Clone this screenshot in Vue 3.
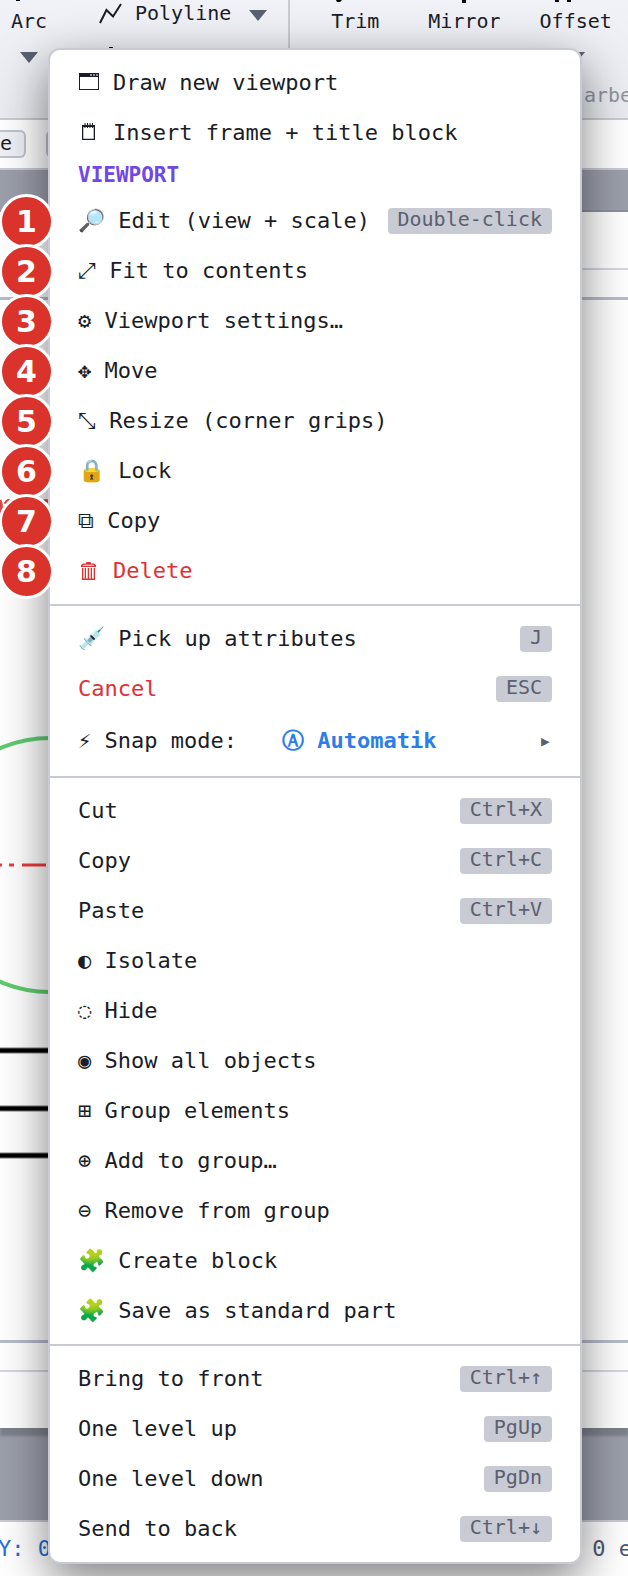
<template>
  <div class="app">
    <div class="workspace">
      <header class="toolbar">
        <div class="tool tool-arc">
          <svg class="stub" width="68" height="2"><path d="M16 0h4v1h-4z" /></svg>
          <span>Arc</span>
          <i class="caret"></i>
        </div>
        <div class="tool-line">
          <svg class="polyline" width="24" height="24" viewBox="0 0 24 24">
            <path d="M1 22 L7.500 9 L14 15.500 L22 3" />
          </svg>
          <span>Polyline</span>
          <i class="caret"></i>
          <svg class="peek" width="6" height="2"><path d="M1 1h4v1H1z" /></svg>
        </div>
        <div class="separator"></div>
        <div v-for="tool in tools" :key="tool.name" class="tool">
          <svg class="stub" width="68" height="3"><path :d="tool.stub" /></svg>
          <span>{{ tool.name }}</span>
          <i v-if="tool.more" class="caret"></i>
        </div>
        <span class="group-name">arbe</span>
      </header>

      <nav class="tabs">
        <button type="button" class="tab tab-first">e</button>
        <button type="button" class="tab tab-next" aria-label="Layout"></button>
      </nav>

      <main class="canvas">
        <div class="paper">
          <div class="frame-outer"></div>
          <div class="frame-inner"></div>
          <svg class="drawing" width="60" height="1216" viewBox="0 212 60 1216">
            <circle cx="50" cy="865" r="127" fill="none" stroke="#5ecb70" stroke-width="4" />
            <path d="M0 865H2M9 865H14M22 865H46" stroke="#ee3a3a" stroke-width="3" />
            <path d="M0 1050.500H60M0 1108.500H60M0 1155.500H60" stroke="#777" stroke-width="6" />
            <path d="M0 1050.500H60M0 1108.500H60M0 1155.500H60" stroke="#000" stroke-width="4" />
            <path d="M0 500Q3 508 0 516M5 504Q8 498 12 502M42 502Q46 499 49 502" fill="none" stroke="#e04545" stroke-width="3" />
            <path d="M0 577h2" stroke="#555" stroke-width="2" />
          </svg>
        </div>
      </main>

      <footer class="status">
        <span class="coords">Y: 0</span>
        <span class="selection">0 e</span>
      </footer>
    </div>

    <div class="menu" role="menu">
      <template v-for="(group, g) in groups" :key="g">
        <hr v-if="g > 0" class="divider">
        <template v-for="item in group" :key="item.label">
          <h2 v-if="item.heading" class="heading">{{ item.label }}</h2>
          <button
            v-else
            type="button"
            role="menuitem"
            class="item"
            :class="{ danger: item.danger, snap: item.value }"
          >
            <span v-if="item.step" class="step">{{ item.step }}</span>
            <svg v-if="item.shape" class="icon" width="22" height="26" viewBox="0 0 22 26">
              <path :d="item.shape" fill="currentColor" fill-rule="evenodd" />
            </svg>
            <span>{{ item.icon ? item.icon + ' ' : '' }}{{ item.label }}</span>
            <span v-if="item.value" class="value">{{ item.value }}</span>
            <span v-if="item.value" class="arrow">▸</span>
            <kbd v-if="item.key">{{ item.key }}</kbd>
          </button>
        </template>
      </template>
    </div>
  </div>
</template>

<script setup>
const tools = [
  { name: 'Trim', stub: 'M15 0h6l-2 2h-3z' },
  { name: 'Mirror', stub: 'M34 0h4v3h-4z' },
  { name: 'Offset', stub: 'M15 0h4v2h-4zM27 0h4v2h-4z', more: true }
]

// monochrome icons, drawn in a 22x26 box
const windowShape = 'M1 3H21V20H1ZM2 7V19H20V7ZM12 4.500V5.500H14V4.500ZM15 4.500V5.500H17V4.500ZM18 4.500V5.500H20V4.500Z'
const notepadShape = 'M4 5H6.500V3H7.500V5H9V3H10V5H11.500V3H12.500V5H14V3H15V5H17V20H4ZM5.300 7V18.700H15.700V7H15V8H14V7H12.500V8H11.500V7H10V8H9V7H7.500V8H6.500V7Z'
const binShape = 'M3 9V7L5 5.500H8L8.500 4H12.500L13 5.500H16L18 7V9ZM4.500 7.800H16.500L15.500 6.700H5.500ZM4 10H17V22H4ZM5.300 10V20.500H6.700V10ZM8 10V20.500H9.700V10ZM11 10V20.500H12.700V10ZM14 10V20.500H15.700V10Z'

const groups = [
  [
    { shape: windowShape, label: 'Draw new viewport' },
    { shape: notepadShape, label: 'Insert frame + title block' },
    { label: 'VIEWPORT', heading: true },
    { icon: '🔎', label: 'Edit (view + scale)', key: 'Double-click', step: 1 },
    { icon: '⤢', label: 'Fit to contents', step: 2 },
    { icon: '⚙', label: 'Viewport settings…', step: 3 },
    { icon: '✥', label: 'Move', step: 4 },
    { icon: '⤡', label: 'Resize (corner grips)', step: 5 },
    { icon: '🔒', label: 'Lock', step: 6 },
    { icon: '⧉', label: 'Copy', step: 7 },
    { shape: binShape, label: 'Delete', danger: true, step: 8 }
  ],
  [
    { icon: '💉', label: 'Pick up attributes', key: 'J' },
    { label: 'Cancel', key: 'ESC', danger: true },
    { icon: '⚡\uFE0E', label: 'Snap mode:', value: 'Ⓐ Automatik' }
  ],
  [
    { label: 'Cut', key: 'Ctrl+X' },
    { label: 'Copy', key: 'Ctrl+C' },
    { label: 'Paste', key: 'Ctrl+V' },
    { icon: '◐', label: 'Isolate' },
    { icon: '◌', label: 'Hide' },
    { icon: '◉', label: 'Show all objects' },
    { icon: '⊞', label: 'Group elements' },
    { icon: '⊕', label: 'Add to group…' },
    { icon: '⊖', label: 'Remove from group' },
    { icon: '🧩', label: 'Create block' },
    { icon: '🧩', label: 'Save as standard part' }
  ],
  [
    { label: 'Bring to front', key: 'Ctrl+↑' },
    { label: 'One level up', key: 'PgUp' },
    { label: 'One level down', key: 'PgDn' },
    { label: 'Send to back', key: 'Ctrl+↓' }
  ]
]
</script>

<style>
body {
  margin: 0;
}
</style>

<style scoped>
.app {
  position: relative;
  overflow: hidden;
  padding: 48px 46px 12px 48px;
  font-family: "DejaVu Sans Mono", monospace;
  font-size: 22px;
  color: #1a1d26;
}

.app * {
  box-sizing: border-box;
}

/* everything behind the menu */
.workspace {
  position: absolute;
  inset: 0;
  display: flex;
  flex-direction: column;
  background: #fff;
}

.toolbar {
  position: relative;
  display: flex;
  height: 120px;
  border-bottom: 2px solid #c8cbd3;
  background: linear-gradient(#f1f2f7, #e9ebf0);
  font-size: 20px;
  line-height: 24px;
  white-space: nowrap;
}

.tool {
  position: relative;
  display: flex;
  flex-direction: column;
  align-items: center;
  flex: none;
  min-width: 68px;
  margin-right: 39px;
  padding-top: 9px;
}

.tool-arc {
  width: 58px;
  min-width: 0;
  margin-right: 41px;
}

.tool .caret {
  margin-top: 19px;
}

.stub {
  position: absolute;
  top: 0;
  left: 0;
}

.caret {
  border: 9px solid transparent;
  border-top: 11px solid #596071;
  border-bottom: 0;
}

.tool-line {
  position: relative;
  display: flex;
  align-items: center;
  flex: none;
  height: 24px;
  margin-top: 1px;
}

.polyline {
  margin-right: 12px;
  fill: none;
  stroke: #1a1d26;
  stroke-width: 2;
}

.tool-line .caret {
  margin-left: 18px;
  margin-top: 4px;
}

.peek {
  position: absolute;
  top: 45px;
  left: 9px;
}

.separator {
  flex: none;
  width: 2px;
  height: 100px;
  margin: 0 31px 0 21px;
  background: #c8cbd3;
}

.group-name {
  position: absolute;
  top: 83px;
  left: calc(100% - 44px);
  color: #8d95a1;
}

.tabs {
  display: flex;
  gap: 20px;
  align-items: center;
  height: 50px;
  border-bottom: 2px solid #c8cbd3;
}

.tab {
  height: 28px;
  border: 2px solid #c0c3d0;
  border-radius: 6px;
  background: #eff0f5;
  font: inherit;
  font-size: 20px;
  line-height: 20px;
  color: #1a1d26;
}

.tab-first {
  border-left: 0;
  border-radius: 0 6px 6px 0;
  padding: 0 12px 2px 0;
}

.tab-next {
  width: 80px;
}

.canvas {
  flex: 1;
  padding: 40px 0 92px;
  background: #9b9fab;
}

.paper {
  position: relative;
  height: 100%;
  border-top: 2px solid #8c909d;
  background: #fff;
  box-shadow: 0 8px 3px #7c808b;
}

.frame-outer {
  position: absolute;
  inset: 56px 0;
  border: solid #d6d6e1;
  border-width: 2px 0;
}

.frame-inner {
  position: absolute;
  inset: 85px 0;
  border: solid #b7bcca;
  border-width: 3px 0;
}

.drawing {
  position: absolute;
  top: 0;
  left: 0;
}

.status {
  display: flex;
  justify-content: space-between;
  align-items: center;
  height: 56px;
  padding-bottom: 2px;
  border-top: 2px solid #c8cbd3;
  background: #fff;
}

.coords {
  margin-left: -2px;
  color: #1c70d8;
}

.selection {
  margin-right: -4px;
  color: #4e5668;
}

.menu {
  position: relative;
  padding: 8px 0;
  border: 2px solid #c8cbd3;
  border-radius: 12px;
  background: #fff;
  box-shadow: 0 16px 48px rgba(0, 0, 0, 0.5);
}

.item {
  position: relative;
  display: flex;
  align-items: center;
  width: 100%;
  height: 50px;
  padding: 0 28px;
  border: 0;
  background: none;
  font: inherit;
  line-height: 26px;
  color: inherit;
  text-align: left;
  white-space: pre;
}

.item.danger {
  color: #e03131;
}

.item.snap {
  height: 54px;
}

.icon {
  flex: none;
  margin-right: 13px;
}

.heading {
  margin: 0;
  padding: 4px 28px 8px;
  font-size: 21px;
  line-height: 26px;
  color: #7048e8;
}

.divider {
  height: 2px;
  margin: 8px 0;
  border: 0;
  background: #c8cbd3;
}

.value {
  margin-left: 45px;
  font-weight: bold;
  color: #2b7de9;
}

.arrow {
  margin-left: auto;
  color: #5a6070;
}

kbd {
  height: 26px;
  margin-left: auto;
  padding: 0 10px;
  border-radius: 4px;
  background: #c8cbd3;
  font-family: inherit;
  font-size: 20px;
  line-height: 22px;
  color: #5a6070;
}

/* numbered callouts pinned to the menu edge */
.step {
  position: absolute;
  top: -2px;
  left: -51px;
  width: 55px;
  height: 55px;
  border: 3px solid #fff;
  border-radius: 50%;
  background: #d9332b;
  font-family: "DejaVu Sans", sans-serif;
  font-size: 30px;
  font-weight: bold;
  line-height: 50px;
  color: #fff;
  text-align: center;
}
</style>
